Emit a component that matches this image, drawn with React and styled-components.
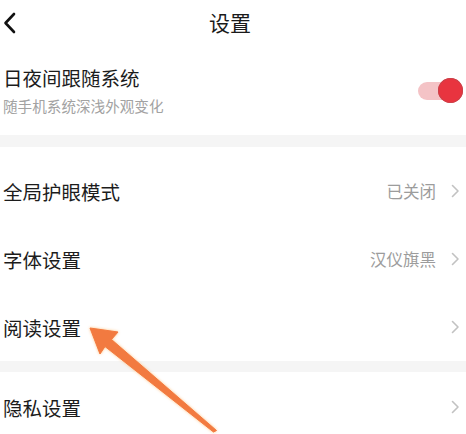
import React from 'react';
import styled, {createGlobalStyle} from 'styled-components';

const GlobalStyle = createGlobalStyle`
  html, body {
    margin: 0;
    padding: 0;
    background: #ffffff;
  }
  body {
    font-family: "Noto Sans CJK SC", "Noto Sans", sans-serif;
    color: #1c1c1c;
  }
`;

const Page = styled.div`
  position: relative;
  width: 466px;
  height: 434px;
  overflow: hidden;
  background: #fff;
`;

const Header = styled.div`
  display: grid;
  grid-template-columns: 34px 1fr 40px;
  align-items: center;
  height: 45px;

  > h1 {
    margin: 0;
    text-align: center;
    font-size: 21px;
    font-weight: 400;
    color: #1a1a1a;
    line-height: 45px;
  }
`;

const BackButton = styled.div`
  display: flex;
  align-items: center;
  padding-left: 3px;
  height: 45px;
`;

const ToggleSection = styled.div`
  display: flex;
  align-items: center;
  justify-content: space-between;
  height: 90px;
  padding: 1px 3px 0 3px;
  box-sizing: border-box;
`;

const TextBlock = styled.div`
  display: flex;
  flex-direction: column;
  gap: 5px;
`;

const Title = styled.div`
  font-size: 19.5px;
  line-height: 26px;
  color: #1c1c1c;
`;

const Subtitle = styled.div`
  font-size: 14.6px;
  line-height: 20px;
  color: #a2a2a2;
`;

const Switch = styled.div`
  position: relative;
  width: 45px;
  height: 26px;
  display: flex;
  align-items: center;
`;

const Track = styled.div`
  width: 36px;
  height: 18px;
  border-radius: 9px;
  background: #f4c3c6;
`;

const Knob = styled.div`
  position: absolute;
  right: 0;
  top: 0;
  width: 25px;
  height: 25px;
  border-radius: 50%;
  background: #e8343f;
  box-shadow: inset 0 0 0 1px #c9434b;
`;

const Divider = styled.div`
  height: ${(p) => p.h}px;
  background: #f5f5f5;
`;

const List = styled.div`
  padding-top: ${(p) => p.top || 0}px;
`;

const Row = styled.div`
  display: flex;
  align-items: center;
  justify-content: space-between;
  height: ${(p) => p.h || 68}px;
  padding: 0 6px 0 3px;
`;

const Label = styled.span`
  font-size: 19.5px;
  color: #1c1c1c;
`;

const Right = styled.div`
  display: flex;
  align-items: center;
  gap: 15px;

  > span {
    font-size: 16.5px;
    color: #9c9c9c;
  }
`;

const Annotation = styled.svg`
  position: absolute;
  left: 0;
  top: 0;
  pointer-events: none;
  filter: drop-shadow(0 0 1.5px rgba(255, 190, 120, 0.9));
`;

function Chevron() {
  return (
    <svg width="9" height="14" viewBox="0 0 9 14">
      <path d="M1.5 1.5 L7 7 L1.5 12.5" fill="none" stroke="#c2c2c2" strokeWidth="1.6" strokeLinecap="round" strokeLinejoin="round"/>
    </svg>
  );
}

function SettingRow({label, value, h}) {
  return (
    <Row h={h}>
      <Label>{label}</Label>
      <Right>
        {value && <span>{value}</span>}
        <Chevron/>
      </Right>
    </Row>
  );
}

export default function App() {
  return (
    <Page>
      <GlobalStyle/>
      <Header>
        <BackButton>
          <svg width="14" height="22" viewBox="0 0 14 22">
            <path d="M11 2 L2.5 11 L11 20" fill="none" stroke="#111" strokeWidth="2.6" strokeLinecap="round" strokeLinejoin="round"/>
          </svg>
        </BackButton>
        <h1>设置</h1>
        <div/>
      </Header>

      <ToggleSection>
        <TextBlock>
          <Title>日夜间跟随系统</Title>
          <Subtitle>随手机系统深浅外观变化</Subtitle>
        </TextBlock>
        <Switch>
          <Track/>
          <Knob/>
        </Switch>
      </ToggleSection>

      <Divider h={12}/>

      <List top={10}>
        <SettingRow label="全局护眼模式" value="已关闭"/>
        <SettingRow label="字体设置" value="汉仪旗黑"/>
        <SettingRow label="阅读设置"/>
      </List>

      <Divider h={11}/>

      <List>
        <SettingRow label="隐私设置" h={70}/>
      </List>

      <Annotation width="466" height="434" viewBox="0 0 466 434">
        <polygon
          points="90,328 118,332 111.5,339.5 216.5,430.5 213.5,432 105,346.5 100,354"
          fill="#f27a40"
          stroke="#f27a40"
          strokeWidth="1"
          strokeLinejoin="round"
        />
      </Annotation>
    </Page>
  );
}
